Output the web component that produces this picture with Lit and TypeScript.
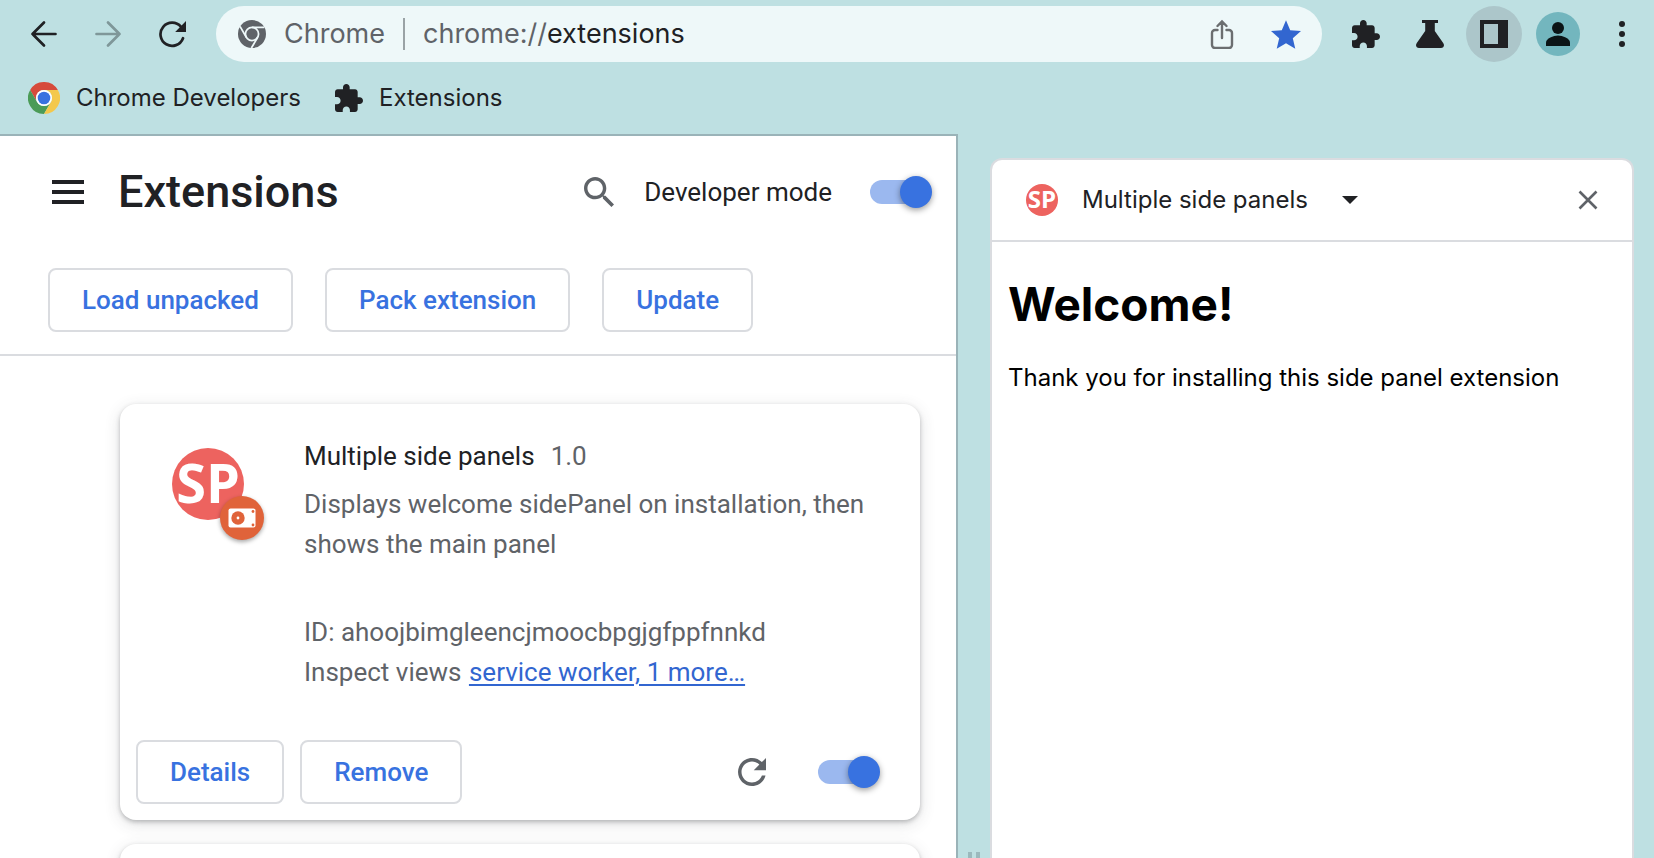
import { LitElement, html, css, svg } from "lit";
import { customElement, property } from "lit/decorators.js";

const base = css`
  *, *::before, *::after { box-sizing: border-box; }
  button, input, select { font: inherit; color: inherit; margin: 0; padding: 0; border: 0; background: none; }
  button { cursor: pointer; }
  h1, h2, p, ul { margin: 0; padding: 0; font-weight: inherit; }
  svg { display: block; flex: none; }
`;

const icon = (box: string, w: number, h: number, body: unknown) =>
  html`<svg viewBox=${box} width=${w} height=${h} fill="currentColor" aria-hidden="true">${body}</svg>`;

const backIcon = icon("0 0 28 28", 28, 28, svg`<path d="M25.5 14H2.5M14 2.5L2.5 14 14 25.5" fill="none" stroke="currentColor" stroke-width="2.7" stroke-linecap="round" stroke-linejoin="round"/>`);
const forwardIcon = icon("0 0 28 28", 28, 28, svg`<path d="M2.5 14h23M14 2.5L25.5 14 14 25.5" fill="none" stroke="currentColor" stroke-width="2.7" stroke-linecap="round" stroke-linejoin="round"/>`);
const reloadIcon = icon("0 0 28 28", 28, 28, svg`<path d="M25 18.2A11.6 11.6 0 1 1 23 6.8" fill="none" stroke="currentColor" stroke-width="2.7" stroke-linecap="round"/><path d="M28 1v11H17.2z"/>`);
const refreshIcon = icon("4 4 16 16", 28, 28, svg`<path d="M17.65 6.35C16.2 4.9 14.21 4 12 4c-4.42 0-7.99 3.58-7.99 8s3.57 8 7.99 8c3.73 0 6.84-2.55 7.73-6h-2.08c-.82 2.33-3.04 4-5.65 4-3.31 0-6-2.69-6-6s2.69-6 6-6c1.66 0 3.14.69 4.22 1.78L13 11h7V4l-2.35 2.35z"/>`);
const puzzleIcon = icon("2 1 21 21", 28, 28, svg`<path d="M20.5 11H19V7c0-1.1-.9-2-2-2h-4V3.5C13 2.12 11.88 1 10.5 1S8 2.12 8 3.5V5H4c-1.1 0-1.99.9-1.99 2v3.8H3.5c1.49 0 2.7 1.21 2.7 2.7s-1.21 2.7-2.7 2.7H2V20c0 1.1.9 2 2 2h3.8v-1.5c0-1.49 1.21-2.7 2.7-2.7 1.49 0 2.7 1.21 2.7 2.7V22H17c1.1 0 2-.9 2-2v-4h1.5c1.38 0 2.5-1.12 2.5-2.5S21.88 11 20.5 11z"/>`);
const flaskIcon = icon("0 0 28 28", 28, 28, svg`<path d="M6 0h16v3h-3.200v8l8.400 12C29 25.500 27.500 28 25 28H3C.5 28-1 25.500.8 23l8.400-12V3H6z"/>`);
const panelIcon = icon("0 0 28 28", 28, 28, svg`<path d="M0 0h28v28H0zM4 4v20h14V4z" fill-rule="evenodd"/>`);
const personIcon = icon("0 0 24 24", 24, 24, svg`<circle cx="12" cy="6" r="6"/><path d="M0 24v-3.500C0 16.400 7.500 13.500 12 13.500s12 2.900 12 7V24z"/>`);
const dotsIcon = icon("0 0 6 26", 6, 26, svg`<circle cx="3" cy="3" r="3"/><circle cx="3" cy="13" r="3"/><circle cx="3" cy="23" r="3"/>`);
const shareIcon = icon("0 0 24 30", 24, 30, svg`<path d="M7.500 11H5a3 3 0 0 0-3 3v12a3 3 0 0 0 3 3h14a3 3 0 0 0 3-3V14a3 3 0 0 0-3-3h-2.500M12 19V2.500M7.500 7L12 2.500 16.500 7" fill="none" stroke="currentColor" stroke-width="2.400" stroke-linecap="round"/>`);
const starIcon = icon("2 2 20 19", 30, 29, svg`<path d="M12 17.27L18.180 21l-1.640-7.030L22 9.240l-7.190-.61L12 2 9.190 8.630 2 9.240l5.460 4.730L5.820 21z"/>`);
const searchIcon = icon("3 3 17.490 17.490", 30, 30, svg`<path d="M15.5 14h-.79l-.28-.27C15.41 12.59 16 11.11 16 9.5 16 5.91 13.09 3 9.5 3S3 5.91 3 9.5 5.910 16 9.5 16c1.61 0 3.09-.59 4.23-1.57l.27.28v.79l5 4.990L20.490 19l-4.990-5zm-6 0C7.010 14 5 11.990 5 9.5S7.010 5 9.5 5 14 7.010 14 9.5 11.990 14 9.5 14z"/>`);
const menuIcon = icon("0 0 32 24", 32, 24, svg`<path d="M0 0h32v4H0zM0 10h32v4H0zM0 20h32v4H0z"/>`);
const closeIcon = icon("0 0 20 20", 20, 20, svg`<path d="M1.500 1.500l17 17M18.500 1.500l-17 17" stroke="currentColor" stroke-width="2.600"/>`);
const caretIcon = icon("0 0 16 8", 16, 8, svg`<path d="M0 0h16L8 8z"/>`);
const chromeGray = icon("0 0 32 32", 28, 28, svg`
  <circle cx="16" cy="16" r="16"/>
  <g fill="none" stroke="#eef8f9" stroke-width="2">
    <circle cx="16" cy="16" r="7.500"/>
    <path d="M16 8.500h14M9.500 19.750l-7.200-12.500M22.500 19.750L15.300 32"/>
  </g>`);
const chromeColor = icon("0 0 32 32", 32, 32, svg`
  <path fill="#d64b3b" d="M2.140 8A16 16 0 0 1 29.860 8H16A8 8 0 0 0 9.070 20z"/>
  <path fill="#4b9b57" d="M2.140 8L9.070 20A8 8 0 0 0 22.930 20L16 32A16 16 0 0 1 2.140 8z"/>
  <path fill="#f4c84c" d="M29.860 8A16 16 0 0 1 16 32L22.930 20A8 8 0 0 0 16 8z"/>
  <circle cx="16" cy="16" r="8" fill="#fff"/>
  <circle cx="16" cy="16" r="6.300" fill="#3972e0"/>`);
const cameraIcon = icon("0 0 28 20", 28, 20, svg`
  <rect x=".5" y=".5" width="27" height="19" rx="2" fill="#fff"/>
  <circle cx="10" cy="10" r="6.700" fill="#e0633a"/><circle cx="10" cy="10" r="1.400" fill="#fff"/>
  <circle cx="25" cy="3.500" r="1.400" fill="#e0633a"/><circle cx="25" cy="17" r="1.400" fill="#e0633a"/>`);

@customElement("sp-logo")
class SpLogo extends LitElement {
  @property({ type: Number }) size = 72;
  static styles = css`
    :host { display: block; flex: none; }
    svg { display: block; overflow: visible; }
    .letters { font: 700 54px "Open Sans", sans-serif; fill: #fff; }
  `;
  render() {
    return html`<svg viewBox="0 0 72 72" width=${this.size} height=${this.size}>
      <circle cx="36" cy="36" r="36" fill="#ed635f"/>
      <text class="letters" x="36" y="55" text-anchor="middle">SP</text>
    </svg>`;
  }
}

@customElement("toggle-switch")
class ToggleSwitch extends LitElement {
  @property() label = "";
  @property({ type: Boolean, attribute: "show-label" }) showLabel = false;
  static styles = [base, css`
    :host { display: block; }
    .toggle { display: flex; align-items: center; gap: 38px; font-size: 26px; line-height: 40px; white-space: nowrap; }
    .switch { appearance: none; display: grid; align-items: center; width: 62px; height: 32px; cursor: pointer; }
    .switch::before, .switch::after { content: ""; grid-area: 1 / 1; }
    .switch::before { width: 56px; height: 24px; border-radius: 12px; background: #dadce0; }
    .switch::after { width: 32px; height: 32px; border-radius: 50%; background: #fff; box-shadow: 0 2px 6px rgba(0, 0, 0, .4); }
    .switch:checked::before { background: #9bb8ef; }
    .switch:checked::after { justify-self: end; background: #3872e0; }
  `];
  render() {
    return html`<label class="toggle">
      ${this.showLabel ? html`<span>${this.label}</span>` : null}
      <input class="switch" type="checkbox" role="switch" aria-label=${this.label} checked>
    </label>`;
  }
}

@customElement("browser-toolbar")
class BrowserToolbar extends LitElement {
  static styles = [base, css`
    :host { display: block; font-family: Inter, "Liberation Sans", sans-serif; color: #202124; }
    .bar { display: flex; align-items: center; gap: 16px; padding: 6px 4px 0 16px; }
    .group { display: flex; gap: 8px; }
    .tool { display: grid; place-items: center; width: 56px; height: 56px; border-radius: 50%; }
    .tool:disabled { color: #7f9799; }
    .tool.active { background: #acc6ca; }
    .avatar { display: grid; place-items: center; width: 44px; height: 44px; border-radius: 50%; background: #73b6be; color: #0a1416; }
    .omnibox { flex: 1; min-width: 0; display: flex; align-items: center; height: 56px; padding: 0 8px 0 22px; border-radius: 28px; background: #eef8f9; font-size: 27px; line-height: 40px; color: #5f6368; }
    .origin { padding: 0 18px; }
    .address { flex: 1; min-width: 0; display: flex; padding-left: 18px; margin-right: 16px; }
    .rule { width: 2px; height: 32px; background: #9aa3a6; }
    .url { flex: 1; min-width: 0; color: #202124; outline: 0; }
    .share { color: #6b6e70; }
    .star { color: #3266d0; }
    .bookmarks { display: flex; align-items: center; gap: 34px; height: 72px; padding: 0 28px; font-size: 24px; line-height: 32px; }
    .bookmark { display: flex; align-items: center; gap: 16px; color: inherit; text-decoration: none; }
  `];
  render() {
    return html`
      <div class="bar">
        <nav class="group">
          <button class="tool" aria-label="Back">${backIcon}</button>
          <button class="tool" aria-label="Forward" disabled>${forwardIcon}</button>
          <button class="tool" aria-label="Reload">${reloadIcon}</button>
        </nav>
        <div class="omnibox">
          ${chromeGray}
          <span class="origin">Chrome</span>
          <span class="rule"></span>
          <label class="address"><span>chrome://</span><input class="url" type="text" value="extensions" spellcheck="false"></label>
          <div class="group">
            <button class="tool share" aria-label="Share">${shareIcon}</button>
            <button class="tool star" aria-label="Bookmark">${starIcon}</button>
          </div>
        </div>
        <div class="group">
          <button class="tool" aria-label="Extensions">${puzzleIcon}</button>
          <button class="tool" aria-label="Labs">${flaskIcon}</button>
          <button class="tool active" aria-label="Side panel">${panelIcon}</button>
          <button class="tool" aria-label="Profile"><span class="avatar">${personIcon}</span></button>
          <button class="tool" aria-label="Menu">${dotsIcon}</button>
        </div>
      </div>
      <nav class="bookmarks">
        <a class="bookmark" href="#developers">${chromeColor}<span>Chrome Developers</span></a>
        <a class="bookmark" href="#extensions">${puzzleIcon}<span>Extensions</span></a>
      </nav>`;
  }
}

@customElement("extensions-page")
class ExtensionsPage extends LitElement {
  static styles = [base, css`
    :host { display: block; min-height: 0; overflow: hidden; box-sizing: border-box; background: #fff; border: solid #9ab3b8; border-width: 2px 2px 0 0; font: 26px/40px Roboto, sans-serif; color: #202124; }
    .header { display: flex; align-items: center; height: 112px; padding: 0 24px 0 52px; }
    .title { flex: 1; padding-left: 34px; font-size: 45px; line-height: 56px; font-weight: 500; }
    .search { margin-right: 30px; color: #5f6368; }
    .actions { display: flex; gap: 32px; padding: 20px 48px 22px; border-bottom: 2px solid #dadce0; }
    .outlined { height: 64px; padding: 0 32px; border: 2px solid #dadce0; border-radius: 8px; font-weight: 500; color: #3872e0; white-space: nowrap; }
    .cards { display: flex; flex-direction: column; gap: 24px; padding: 48px 36px 48px 120px; }
    .card { display: flex; flex-direction: column; justify-content: space-between; flex: none; min-height: 416px; padding: 32px 16px 16px; border-radius: 16px; background: #fff; box-shadow: 0 2px 4px rgba(60, 64, 67, .3), 0 4px 16px rgba(60, 64, 67, .16); }
    .info { display: flex; gap: 60px; padding: 0 36px; }
    .logo { position: relative; align-self: flex-start; padding-top: 12px; }
    .badge { position: absolute; left: 48px; top: 60px; display: grid; place-items: center; width: 44px; height: 44px; border-radius: 50%; background: #e0633a; box-shadow: 0 2px 4px rgba(0, 0, 0, .35); }
    .text { color: #5f6368; }
    .name { display: flex; gap: 16px; margin-bottom: 8px; }
    .name h2 { font-size: 26px; color: #202124; }
    .views { margin-top: 48px; }
    .link { color: #3266d0; text-underline-offset: 3px; text-decoration-thickness: 2px; margin-left: 1px; }
    .footer { display: flex; align-items: center; gap: 16px; padding-right: 24px; }
    .reload { margin-left: auto; margin-right: 36px; color: #5f6368; }
  `];
  render() {
    return html`
      <header class="header">
        <button aria-label="Main menu">${menuIcon}</button>
        <h1 class="title">Extensions</h1>
        <button class="search" aria-label="Search extensions">${searchIcon}</button>
        <toggle-switch label="Developer mode" show-label></toggle-switch>
      </header>
      <div class="actions">
        <button class="outlined">Load unpacked</button>
        <button class="outlined">Pack extension</button>
        <button class="outlined">Update</button>
      </div>
      <div class="cards">
        <article class="card">
          <div class="info">
            <div class="logo"><sp-logo></sp-logo><span class="badge">${cameraIcon}</span></div>
            <div class="text">
              <div class="name"><h2>Multiple side panels</h2><span>1.0</span></div>
              <p>Displays welcome sidePanel on installation, then shows the main panel</p>
              <p class="views">ID: ahoojbimgleencjmoocbpgjgfppfnnkd</p>
              <p>Inspect views <a class="link" href="#service-worker">service worker, 1 more…</a></p>
            </div>
          </div>
          <div class="footer">
            <button class="outlined">Details</button>
            <button class="outlined">Remove</button>
            <button class="reload" aria-label="Reload">${refreshIcon}</button>
            <toggle-switch label="On"></toggle-switch>
          </div>
        </article>
        <article class="card"></article>
      </div>`;
  }
}

@customElement("side-panel")
class SidePanel extends LitElement {
  static styles = [base, css`
    :host { display: block; min-height: 0; overflow: hidden; box-sizing: border-box; border: 2px solid #dadce0; border-bottom: 0; border-radius: 12px 12px 0 0; background: #fff; font: 24px/32px Inter, "Liberation Sans", sans-serif; color: #000; }
    .header { display: flex; align-items: center; gap: 24px; height: 82px; padding: 0 34px; border-bottom: 2px solid #dadce0; color: #202124; }
    .picker { display: grid; align-items: center; }
    .picker select, .picker svg { grid-area: 1 / 1; }
    .picker select { appearance: none; padding-right: 50px; outline: 0; }
    .picker svg { justify-self: end; pointer-events: none; }
    .close { margin-left: auto; color: #5f6368; }
    .body { display: flex; flex-direction: column; gap: 28px; padding: 32px 16px; }
    .welcome { font-size: 46px; line-height: 60px; font-weight: 700; }
  `];
  render() {
    return html`
      <header class="header">
        <sp-logo size="32"></sp-logo>
        <label class="picker">
          <select aria-label="Side panel"><option>Multiple side panels</option></select>
          ${caretIcon}
        </label>
        <button class="close" aria-label="Close">${closeIcon}</button>
      </header>
      <div class="body">
        <h1 class="welcome">Welcome!</h1>
        <p>Thank you for installing this side panel extension</p>
      </div>`;
  }
}

@customElement("app-root")
class AppRoot extends LitElement {
  static styles = [base, css`
    :host { display: flex; flex-direction: column; height: 100vh; overflow: hidden; background: #bee0e2; }
    .content { flex: 1; min-height: 0; display: grid; grid-template-columns: minmax(0, 479fr) 32px minmax(0, 322fr); grid-template-rows: minmax(0, 1fr); padding-right: 20px; }
    .gutter { display: flex; justify-content: center; align-items: flex-end; gap: 4px; }
    .grip { width: 4px; height: 6px; background: #9bb9bd; }
    .panel { margin-top: 24px; }
  `];
  render() {
    return html`
      <browser-toolbar></browser-toolbar>
      <div class="content">
        <extensions-page></extensions-page>
        <div class="gutter"><span class="grip"></span><span class="grip"></span></div>
        <side-panel class="panel"></side-panel>
      </div>`;
  }
}
